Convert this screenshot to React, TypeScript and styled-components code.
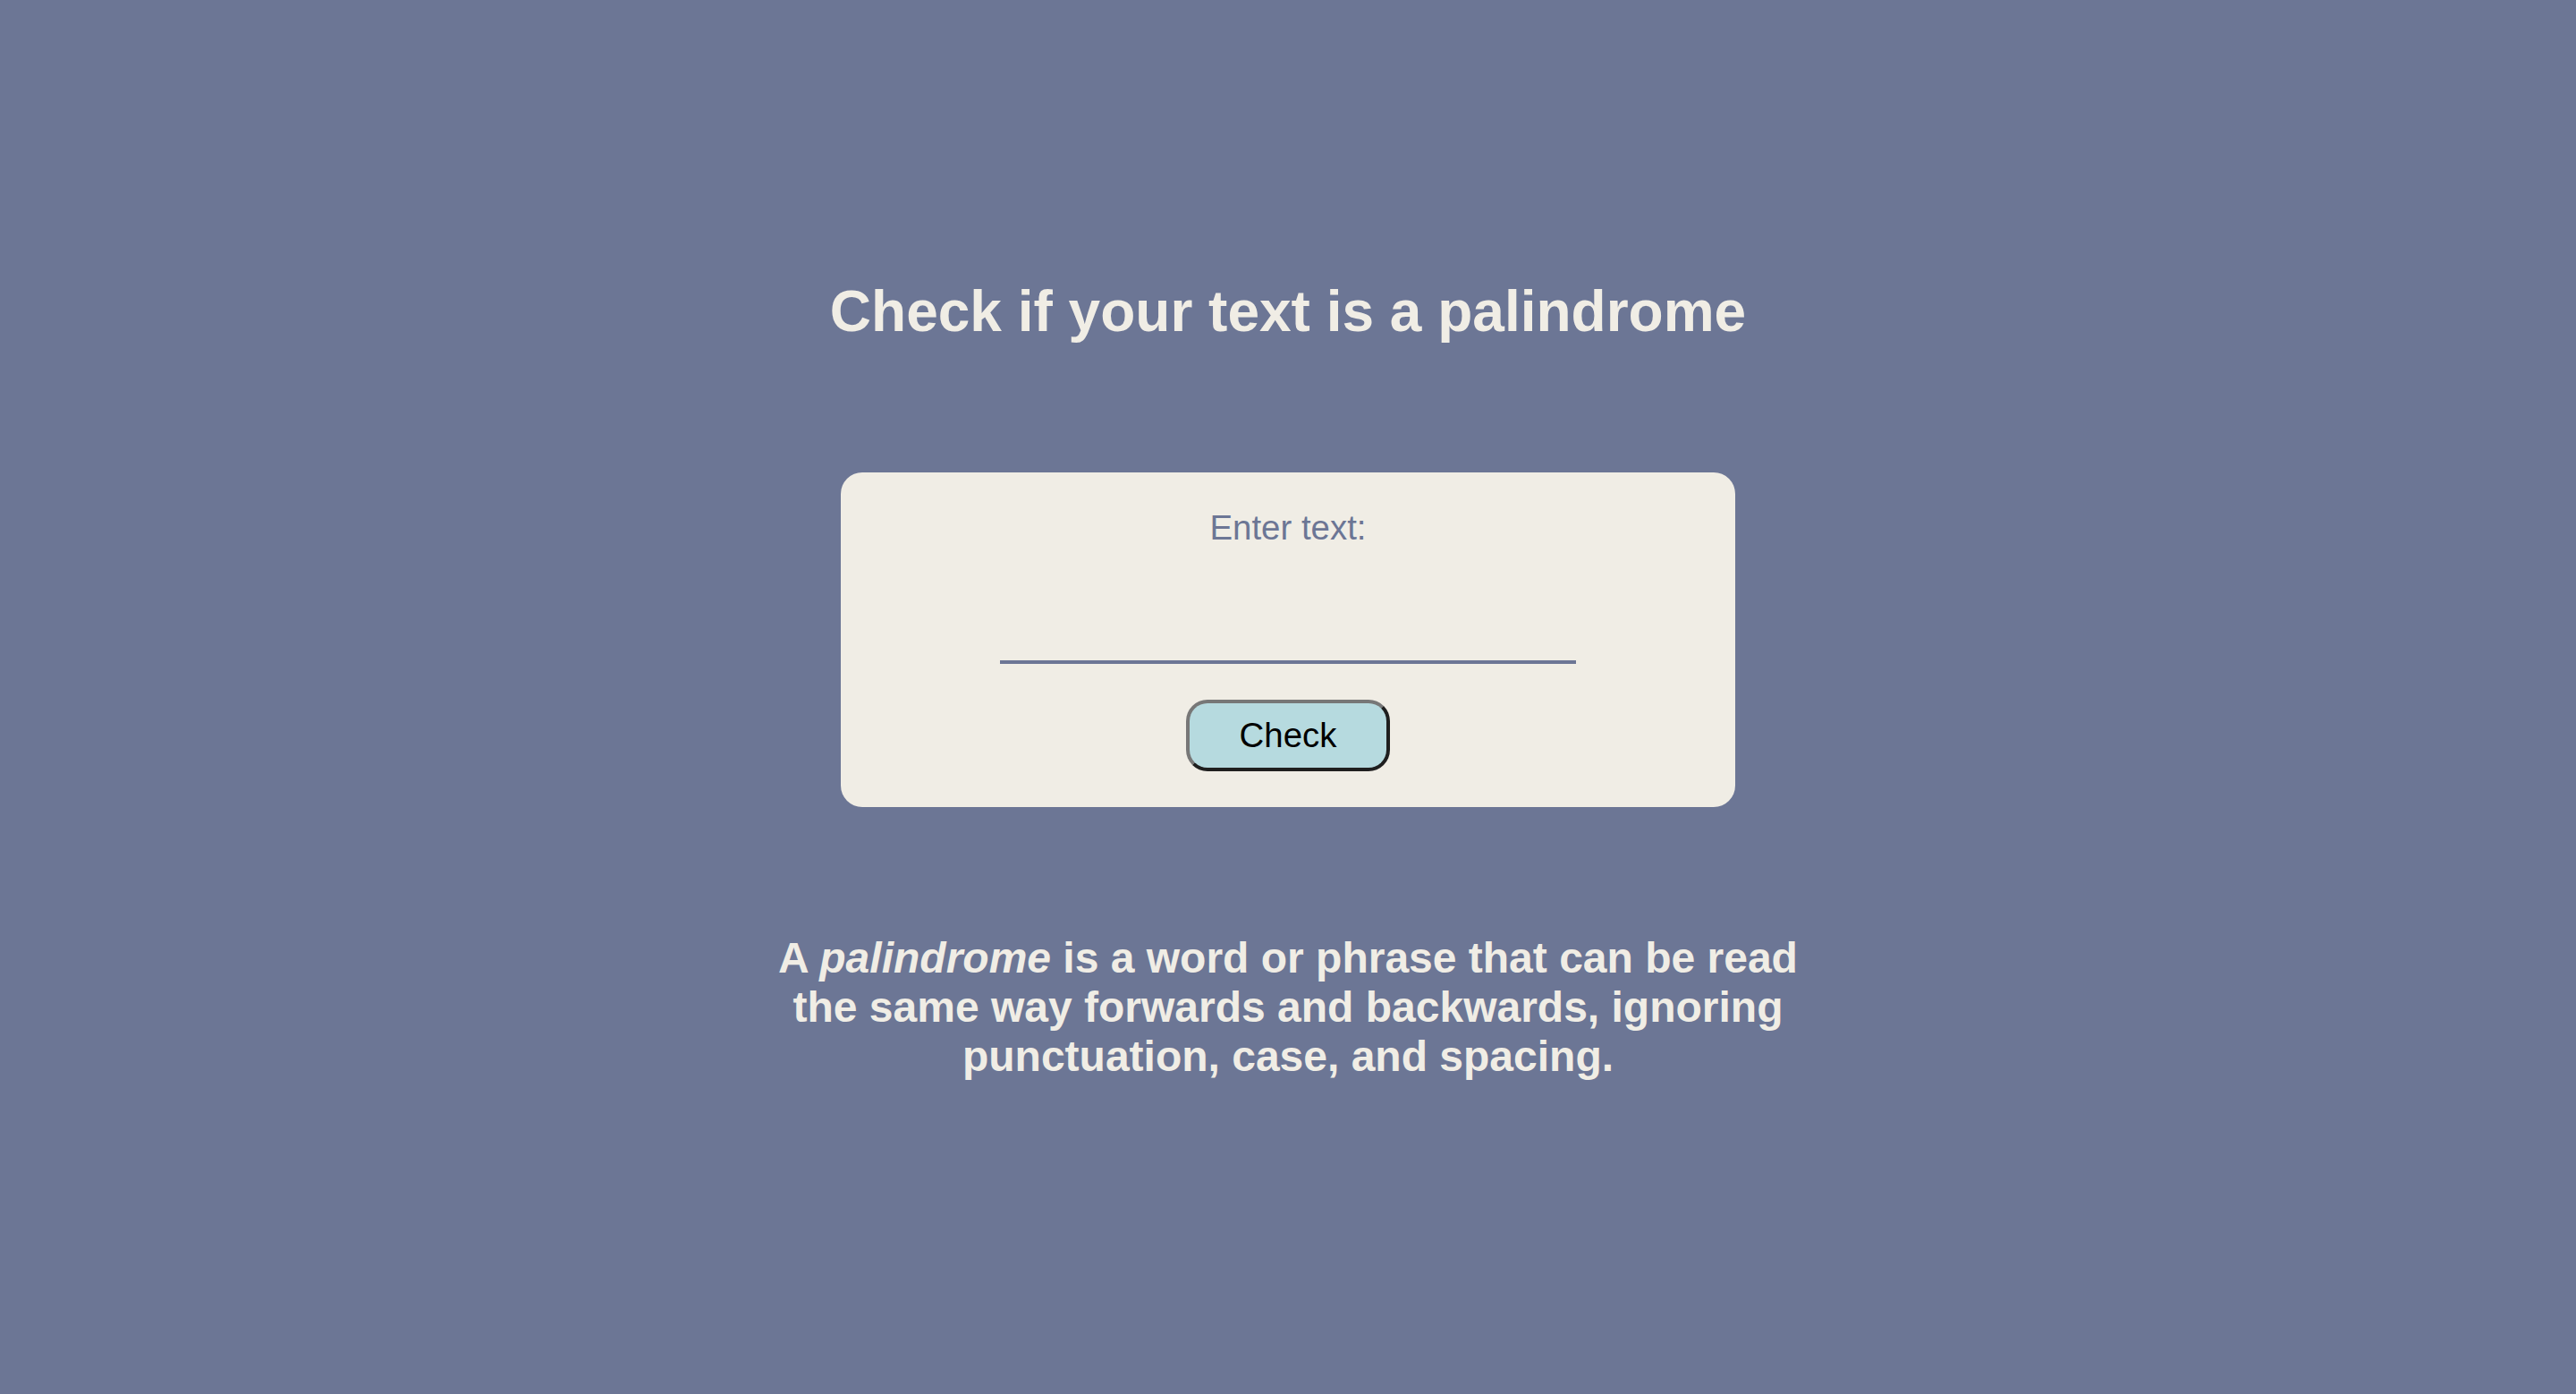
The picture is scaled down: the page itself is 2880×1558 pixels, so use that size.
import React from "react";
import styled, { createGlobalStyle } from "styled-components";

const GlobalStyle = createGlobalStyle`
  html, body {
    margin: 0;
    padding: 0;
    background: #6c7695;
    min-height: 100%;
  }
  body {
    font-family: "Liberation Sans", Arial, Helvetica, sans-serif;
  }
`;

const Page = styled.main`
  min-height: 1558px;
  box-sizing: border-box;
  padding-top: 311px;
  display: flex;
  flex-direction: column;
  align-items: center;
  background: #6c7695;
  color: #f0ede5;
`;

const Title = styled.h1`
  margin: 0;
  font-size: 64px;
  font-weight: 700;
  text-align: center;
  color: #f0ede5;
`;

const Card = styled.form`
  margin-top: 143px;
  width: 1000px;
  box-sizing: border-box;
  padding: 40px 0;
  background: #f0ede5;
  border-radius: 24px;
  display: flex;
  flex-direction: column;
  align-items: center;
`;

const Label = styled.label`
  display: block;
  font-size: 38.4px;
  color: #6c7695;
`;

const TextInput = styled.input`
  box-sizing: border-box;
  width: 644px;
  height: 130px;
  margin: 0;
  padding: 0 8px;
  border: none;
  border-bottom: 4px solid #6c7695;
  background: transparent;
  font-family: "Liberation Sans", Arial, sans-serif;
  font-size: 38.4px;
  color: #222;
  outline: none;
`;

const Button = styled.button`
  margin-top: 40px;
  padding: 14px 56px;
  background: #b6dadf;
  border-width: 4px;
  border-style: solid;
  border-color: #777777 #1f1f1f #1f1f1f #777777;
  border-radius: 24px;
  font-family: "Liberation Sans", Arial, sans-serif;
  font-size: 38.4px;
  color: #000;
  cursor: pointer;
`;

const Description = styled.p`
  margin: 141px 0 0;
  max-width: 1200px;
  text-align: center;
  font-size: 48px;
  font-weight: 700;
  color: #f0ede5;
`;

export default function App() {
  return (
    <>
      <GlobalStyle />
      <Page>
        <Title>Check if your text is a palindrome</Title>
        <Card onSubmit={(e) => e.preventDefault()}>
          <Label htmlFor="text-input">Enter text:</Label>
          <TextInput id="text-input" type="text" />
          <Button type="submit">Check</Button>
        </Card>
        <Description>
          A <em>palindrome</em> is a word or phrase that can be read the same way
          forwards and backwards, ignoring punctuation, case, and spacing.
        </Description>
      </Page>
    </>
  );
}
